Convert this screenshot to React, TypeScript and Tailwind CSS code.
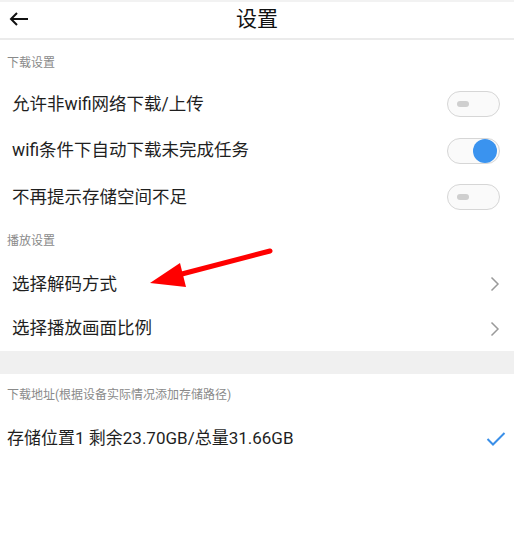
import React from 'react';

const font = { fontFamily: '"Roboto", "Noto Sans CJK SC", sans-serif' };

function Toggle({ on }: { on?: boolean }) {
  return (
    <div className="w-[53px] h-[26px] rounded-full border-[1.5px] border-[#d6d6d6] bg-[#fafafa] flex items-center px-[2px]">
      {on ? (
        <div className="ml-auto w-[24px] h-[24px] rounded-full bg-[#3a93ef]" />
      ) : (
        <div className="ml-[7px] w-[12px] h-[6px] rounded-[3px] bg-[#cfcfcf]" />
      )}
    </div>
  );
}

function Chevron() {
  return (
    <svg width="10" height="16" viewBox="0 0 10 16">
      <path d="M1.5 1.5 L8 8 L1.5 14.5" fill="none" stroke="#9a9a9a" strokeWidth="1.5" />
    </svg>
  );
}

function Label({ text, className }: { text: string; className: string }) {
  return (
    <div className={`flex items-center pl-[7px] text-[12px] text-[#8a8a8a] ${className}`}>{text}</div>
  );
}

function Row({ text, h, right }: { text: string; h: string; right: React.ReactNode }) {
  return (
    <div className={`flex items-center justify-between pl-[12px] pr-[14px] ${h}`}>
      <span className="text-[17.5px] text-[#1f1f1f]">{text}</span>
      {right}
    </div>
  );
}

export default function App() {
  return (
    <div className="relative w-[514px] h-[540px] bg-white overflow-hidden" style={font}>
      <div className="h-[2px] bg-[#f2f2f2]" />
      {/* 标题栏 */}
      <div className="relative flex items-center justify-center h-[38px] border-b-2 border-[#ebebeb]">
        <svg width="22" height="16" viewBox="0 0 22 16" className="absolute left-[8px] top-[9px]">
          <path d="M20 8 H3 M9 2 L3 8 L9 14" fill="none" stroke="#111" strokeWidth="2" />
        </svg>
        <span className="text-[21px] text-[#111]">设置</span>
      </div>

      <Label text="下载设置" className="h-[41px] pt-[5px]" />
      <Row text="允许非wifi网络下载/上传" h="h-[46px]" right={<Toggle />} />
      <Row text="wifi条件下自动下载未完成任务" h="h-[47px]" right={<Toggle on />} />
      <Row text="不再提示存储空间不足" h="h-[46px]" right={<Toggle />} />

      <Label text="播放设置" className="h-[42px]" />
      <Row text="选择解码方式" h="h-[44px]" right={<Chevron />} />
      <Row text="选择播放画面比例" h="h-[45px]" right={<Chevron />} />

      <div className="h-[23px] bg-[#f0f0f0]" />

      <Label text="下载地址(根据设备实际情况添加存储路径)" className="h-[42px]" />
      <div className="flex items-center justify-between pl-[7px] pr-[8px] h-[46px]">
        <span className="text-[17px] text-[#1f1f1f]">存储位置1 剩余23.70GB/总量31.66GB</span>
        <svg width="20" height="16" viewBox="0 0 20 16">
          <path d="M1.5 8 L7 13.5 L18.5 2" fill="none" stroke="#3a8fe8" strokeWidth="2" />
        </svg>
      </div>

      {/* 红色箭头标注 */}
      <svg width="514" height="540" className="absolute left-0 top-0 pointer-events-none">
        <line x1="270" y1="251" x2="178" y2="275" stroke="#ff0000" strokeWidth="5" strokeLinecap="round" />
        <polygon points="150,283 180,263 186,287" fill="#ff0000" />
      </svg>
    </div>
  );
}
